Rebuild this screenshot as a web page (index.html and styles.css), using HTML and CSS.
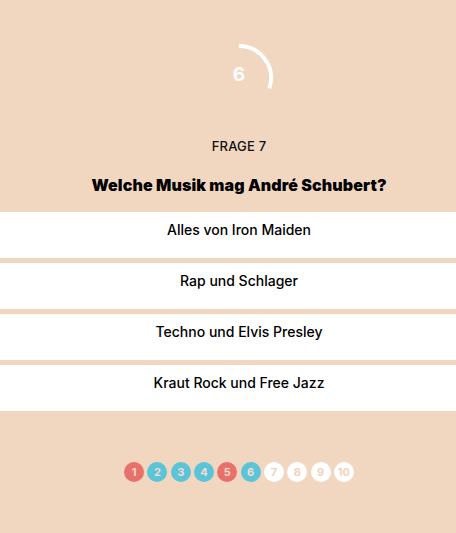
FILE: index.html
```html
<!DOCTYPE html>
<html lang="de">
<head>
<meta charset="utf-8">
<link rel="stylesheet" href="styles.css">
</head>
<body>
<div class="quiz">
  <div class="timer">
    <svg class="timer-ring" width="80" height="80" viewBox="0 0 80 80">
      <path d="M40 8 A32 32 0 0 1 70.3 50.4" fill="none" stroke="#ffffff" stroke-width="4"/>
    </svg>
    <span class="timer-num">6</span>
  </div>
  <div class="label">FRAGE 7</div>
  <h1 class="question">Welche Musik mag André Schubert?</h1>
  <div class="answers">
    <div class="answer">Alles von Iron Maiden</div>
    <div class="answer">Rap und Schlager</div>
    <div class="answer">Techno und Elvis Presley</div>
    <div class="answer">Kraut Rock und Free Jazz</div>
  </div>
  <div class="progress">
    <span class="dot wrong">1</span>
    <span class="dot right">2</span>
    <span class="dot right">3</span>
    <span class="dot right">4</span>
    <span class="dot wrong">5</span>
    <span class="dot right">6</span>
    <span class="dot open">7</span>
    <span class="dot open">8</span>
    <span class="dot open">9</span>
    <span class="dot open">10</span>
  </div>
</div>
</body>
</html>
```
FILE: styles.css
```css
html, body {
  margin: 0;
  padding: 0;
  background: #f1d6c0;
  overflow: hidden;
}
body {
  font-family: Inter, "Noto Sans", sans-serif;
  color: #111;
}
.quiz {
  width: 478px;
  height: 533px;
  display: flex;
  flex-direction: column;
  align-items: center;
}
.timer {
  margin-top: 38px;
  width: 80px;
  height: 80px;
  display: flex;
  align-items: center;
  justify-content: center;
  position: relative;
}
.timer-ring {
  position: absolute;
  left: 0;
  top: 0;
}
.timer-num {
  color: #fff;
  font-weight: 700;
  font-size: 19px;
  line-height: 19px;
  margin-top: -7px;
}
.label {
  margin-top: 20px;
  font-size: 13px;
  line-height: 16px;
  font-weight: 500;
  letter-spacing: 0.2px;
}
.question {
  margin: 21px 0 0;
  font-size: 16px;
  line-height: 20px;
  font-weight: 900;
  letter-spacing: 0.1px;
  color: #000;
}
.answers {
  margin-top: 17px;
  width: 100%;
  display: flex;
  flex-direction: column;
  gap: 5px;
}
.answer {
  background: #fff;
  height: 46px;
  box-sizing: border-box;
  padding-top: 10px;
  text-align: center;
  font-size: 14px;
  line-height: 16px;
  font-weight: 500;
  color: #000;
}
.progress {
  margin-top: 51px;
  display: flex;
  gap: 3.3px;
}
.dot {
  width: 20px;
  height: 20px;
  border-radius: 50%;
  display: flex;
  align-items: center;
  justify-content: center;
  font-size: 11px;
  font-weight: 700;
  color: #f5dccb;
}
.dot.wrong { background: #e7716a; }
.dot.right { background: #5cc4d8; }
.dot.open { background: #fff; color: #efd3bd; }
```
